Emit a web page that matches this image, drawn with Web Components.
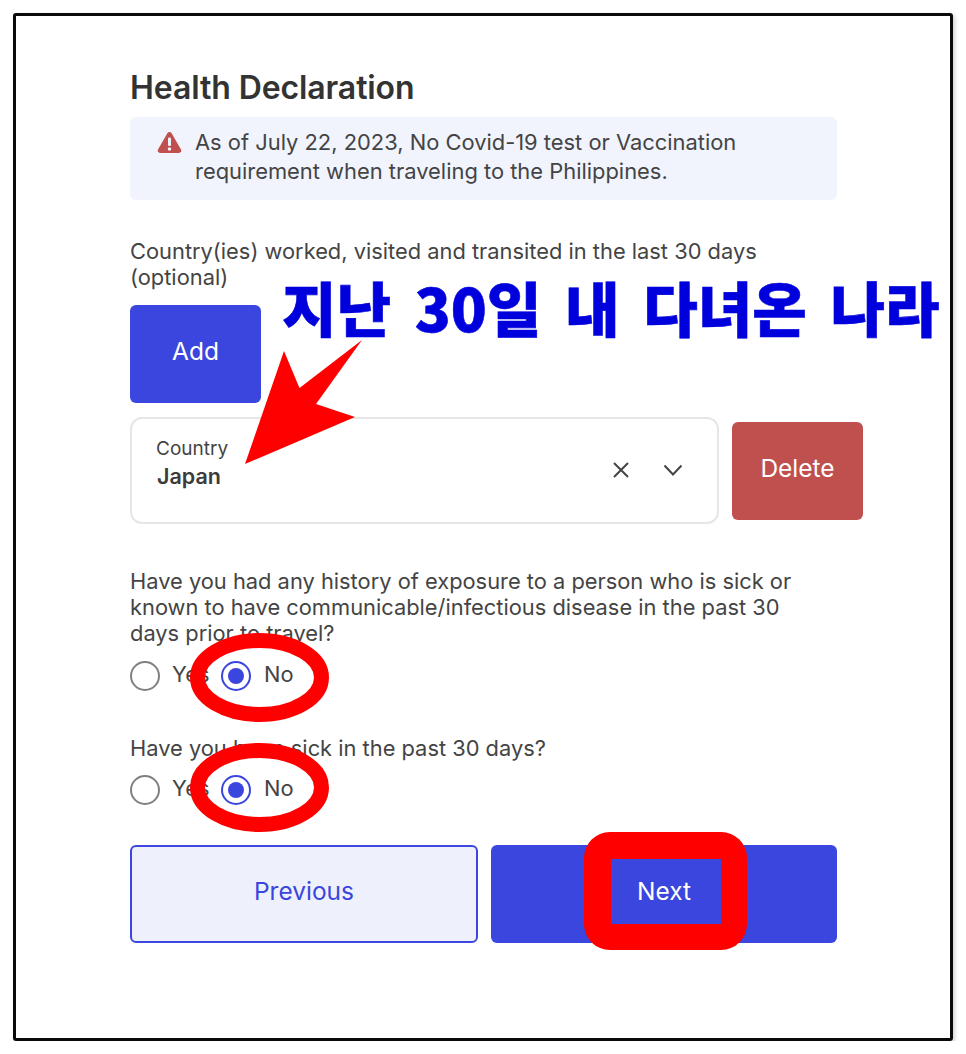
<!DOCTYPE html>
<html lang="en">
<head>
<meta charset="utf-8">
<title>Health Declaration</title>
<style>
  html, body { margin: 0; padding: 0; background: #fff; }
  body { font-family: Inter, "Liberation Sans", sans-serif; color: #3b3b3b; }
</style>
</head>
<body>
<decl-frame>
  <h-title>Health Declaration</h-title>
  <x-notice>As of July 22, 2023, No Covid-19 test or Vaccination<br>requirement when traveling to the Philippines.</x-notice>
  <x-label style="--top:38px">Country(ies) worked, visited and transited in the last 30 days<br>(optional)</x-label>
  <x-btn style="--w:131px;--top:15px">Add</x-btn>
  <x-country></x-country>
  <x-label style="--top:44px">Have you had any history of exposure to a person who is sick or<br>known to have communicable/infectious disease in the past 30<br>days prior to travel?</x-label>
  <x-radios style="--top:15px"></x-radios>
  <x-label style="--top:44px">Have you been sick in the past 30 days?</x-label>
  <x-radios style="--top:14px"></x-radios>
  <x-nav></x-nav>
  <x-marks slot="overlay"></x-marks>
</decl-frame>

<script>
const BLUE = '#3a46dd';

class DeclFrame extends HTMLElement {
  constructor() {
    super();
    this.attachShadow({ mode: 'open' });
    this.shadowRoot.innerHTML = `
      <style>
        :host {
          display: block;
          position: relative;
          box-sizing: border-box;
          width: 940px;
          height: 1028px;
          margin: 13px 0 0 13px;
          padding: 53px 113px 0 114px;
          border: 3px solid #0a0a0a;
          border-radius: 3px;
          box-shadow: 2px 2px 4px rgba(0,0,0,.18);
        }
      </style>
      <slot></slot>
      <slot name="overlay"></slot>
    `;
  }
}

class HTitle extends HTMLElement {
  constructor() {
    super();
    this.attachShadow({ mode: 'open' });
    this.shadowRoot.innerHTML = `
      <style>
        :host { display: block; font-size: 32px; line-height: 38px; font-weight: 600; color: #333; letter-spacing: -.1px; }
      </style>
      <slot></slot>
    `;
  }
}

class XNotice extends HTMLElement {
  constructor() {
    super();
    this.attachShadow({ mode: 'open' });
    this.shadowRoot.innerHTML = `
      <style>
        :host {
          display: flex;
          align-items: flex-start;
          gap: 13px;
          box-sizing: border-box;
          height: 83px;
          margin-top: 10px;
          padding: 11px 0 0 27px;
          background: #f1f4fd;
          border-radius: 6px;
          font-size: 21.900px;
          line-height: 29px;
          color: #444;
        }
        svg { width: 25px; height: 23px; margin-top: 3px; flex: none; }
      </style>
      <svg viewBox="0 0 25 23"><path fill="#c0504d" d="M12.5 1c-.9 0-1.6.4-2.1 1.2L1 18.6C.1 20.2 1.200 22 3 22h19c1.800 0 2.900-1.800 2-3.400L14.600 2.200C14.100 1.400 13.400 1 12.500 1z"/><rect x="11" y="6.500" width="3" height="8.500" rx="1.200" fill="#f1f4fd"/><circle cx="12.500" cy="18" r="1.700" fill="#f1f4fd"/></svg>
      <div><slot></slot></div>
    `;
  }
}

class XLabel extends HTMLElement {
  constructor() {
    super();
    this.attachShadow({ mode: 'open' });
    this.shadowRoot.innerHTML = `
      <style>
        :host { display: block; margin-top: var(--top, 0); font-size: 21.850px; line-height: 26px; color: #444; white-space: nowrap; }
      </style>
      <slot></slot>
    `;
  }
}

class XBtn extends HTMLElement {
  constructor() {
    super();
    this.attachShadow({ mode: 'open' });
    this.shadowRoot.innerHTML = `
      <style>
        :host {
          display: flex;
          align-items: center;
          justify-content: center;
          box-sizing: border-box;
          flex: var(--flex, none);
          width: var(--w, auto);
          height: var(--h, 98px);
          margin-top: var(--top, 0);
          padding-bottom: 6px;
          background: var(--bg, ${BLUE});
          color: var(--fg, #fff);
          border: var(--bd, 0);
          border-radius: 6px;
          font-size: 24.500px;
        }
      </style>
      <slot></slot>
    `;
  }
}

class XCountry extends HTMLElement {
  constructor() {
    super();
    this.attachShadow({ mode: 'open' });
    this.shadowRoot.innerHTML = `
      <style>
        :host { display: flex; align-items: center; gap: 13px; width: 733px; margin-top: 14px; }
        .box {
          box-sizing: border-box;
          display: flex;
          align-items: center;
          width: 589px;
          height: 107px;
          padding: 0 34px 0 24px;
          border: 2px solid #e6e6e6;
          border-radius: 12px;
        }
        .text { flex: 1; padding-bottom: 13px; }
        .cap { font-size: 19px; line-height: 24px; color: #444; }
        .val { font-size: 21.500px; line-height: 30px; font-weight: 600; color: #3b3b3b; margin-left: 1px; }
        svg { display: block; fill: none; stroke: #444; stroke-width: 2; }
        .x { width: 18px; height: 18px; margin-right: 33px; margin-bottom: 1px; }
        .v { width: 20px; height: 12px; margin-bottom: 1px; }
      </style>
      <div class="box">
        <div class="text"><div class="cap">Country</div><div class="val">Japan</div></div>
        <svg class="x" viewBox="0 0 18 18"><path d="M2 2l14 14M16 2L2 16"/></svg>
        <svg class="v" viewBox="0 0 20 12"><path d="M1.500 1.500L10 10.500l8.500-9"/></svg>
      </div>
      <x-btn style="--w:131px;--bg:#c0504d">Delete</x-btn>
    `;
  }
}

class XRadios extends HTMLElement {
  constructor() {
    super();
    this.attachShadow({ mode: 'open' });
    this.shadowRoot.innerHTML = `
      <style>
        :host { display: flex; align-items: center; height: 30px; margin-top: var(--top, 0); font-size: 21.850px; color: #444; }
        .dot { box-sizing: border-box; width: 30px; height: 30px; border-radius: 50%; border: 2px solid #808080; flex: none; }
        .on { border-color: ${BLUE}; padding: 5px; }
        .on::after { content: ""; display: block; width: 16px; height: 16px; border-radius: 50%; background: ${BLUE}; }
        .yes { width: 49px; margin: 0 0 4px 12px; }
        .no { margin: 0 0 4px 13px; }
      </style>
      <span class="dot"></span><span class="yes">Yes</span>
      <span class="dot on"></span><span class="no">No</span>
    `;
  }
}

class XNav extends HTMLElement {
  constructor() {
    super();
    this.attachShadow({ mode: 'open' });
    this.shadowRoot.innerHTML = `
      <style>
        :host { display: flex; gap: 13px; margin-top: 40px; }
      </style>
      <x-btn style="--flex:0 0 348px;--bg:#eef1fc;--fg:${BLUE};--bd:2px solid ${BLUE}">Previous</x-btn>
      <x-btn style="--flex:1">Next</x-btn>
    `;
  }
}

// the red marks and the blue caption painted over the screenshot
class XMarks extends HTMLElement {
  constructor() {
    super();
    this.attachShadow({ mode: 'open' });
    this.shadowRoot.innerHTML = `
      <style>
        :host { position: absolute; left: -16px; top: -16px; width: 966px; height: 1054px; pointer-events: none; }
        svg { position: absolute; left: 0; top: 0; }
        .cap {
          position: absolute;
          left: 282px;
          top: 264px;
          font-family: "Noto Sans CJK KR", sans-serif;
          font-weight: 900;
          font-size: 59.300px;
          line-height: 84px;
          color: #0000dd;
          white-space: nowrap;
          word-spacing: 10px;
          -webkit-text-stroke: .6px #0000dd;
        }
      </style>
      <svg width="966" height="1054" viewBox="0 0 966 1054">
        <path fill="#f00" d="M245 464L284 351L299.500 388L362 340L316 404L355 417Z"/>
        <g fill="none" stroke="#f00" stroke-width="15">
          <ellipse cx="259.500" cy="677.500" rx="62" ry="37"/>
          <ellipse cx="259.500" cy="787.500" rx="62" ry="37"/>
        </g>
        <path fill="#f00" fill-rule="evenodd" d="M610 832h111a26 26 0 0 1 26 26v66a26 26 0 0 1-26 26h-111a26 26 0 0 1-26-26v-66a26 26 0 0 1 26-26zM611 859v65h110v-65z"/>
      </svg>
      <div class="cap">지난 30일 내 다녀온 나라</div>
    `;
  }
}

customElements.define('decl-frame', DeclFrame);
customElements.define('h-title', HTitle);
customElements.define('x-notice', XNotice);
customElements.define('x-label', XLabel);
customElements.define('x-btn', XBtn);
customElements.define('x-country', XCountry);
customElements.define('x-radios', XRadios);
customElements.define('x-nav', XNav);
customElements.define('x-marks', XMarks);
</script>
</body>
</html>
